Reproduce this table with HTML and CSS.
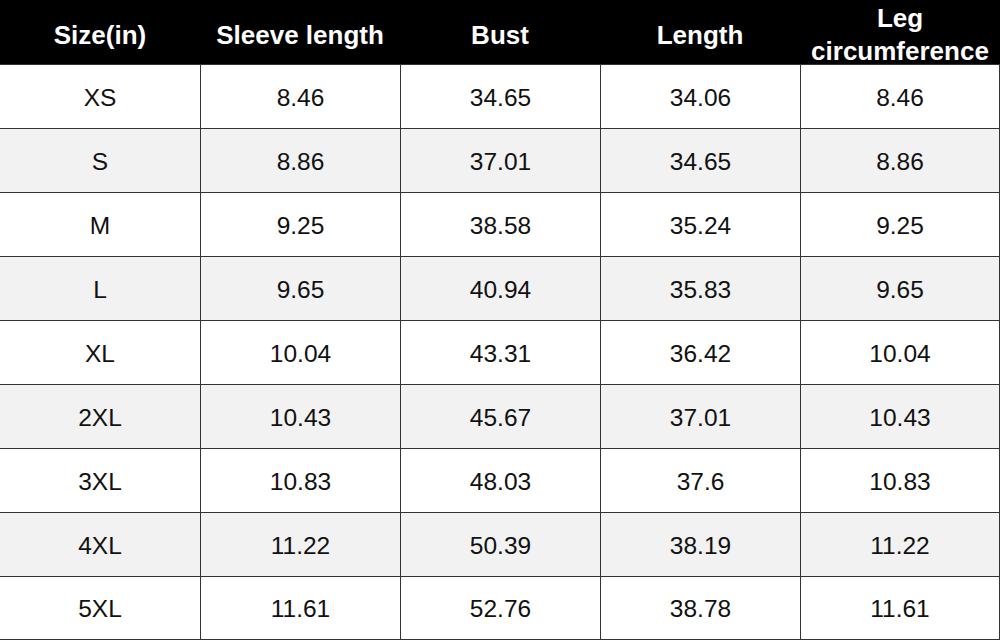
FILE: index.html
```html
<!DOCTYPE html>
<html>
<head>
<meta charset="utf-8">
<link rel="stylesheet" href="styles.css">
</head>
<body>
<div class="chart">
  <div class="row head">
    <div class="cell">Size(in)</div>
    <div class="cell">Sleeve length</div>
    <div class="cell">Bust</div>
    <div class="cell">Length</div>
    <div class="cell">Leg<br>circumference</div>
  </div>
  <div class="row"><div class="cell">XS</div><div class="cell">8.46</div><div class="cell">34.65</div><div class="cell">34.06</div><div class="cell">8.46</div></div>
  <div class="row alt"><div class="cell">S</div><div class="cell">8.86</div><div class="cell">37.01</div><div class="cell">34.65</div><div class="cell">8.86</div></div>
  <div class="row"><div class="cell">M</div><div class="cell">9.25</div><div class="cell">38.58</div><div class="cell">35.24</div><div class="cell">9.25</div></div>
  <div class="row alt"><div class="cell">L</div><div class="cell">9.65</div><div class="cell">40.94</div><div class="cell">35.83</div><div class="cell">9.65</div></div>
  <div class="row"><div class="cell">XL</div><div class="cell">10.04</div><div class="cell">43.31</div><div class="cell">36.42</div><div class="cell">10.04</div></div>
  <div class="row alt"><div class="cell">2XL</div><div class="cell">10.43</div><div class="cell">45.67</div><div class="cell">37.01</div><div class="cell">10.43</div></div>
  <div class="row"><div class="cell">3XL</div><div class="cell">10.83</div><div class="cell">48.03</div><div class="cell">37.6</div><div class="cell">10.83</div></div>
  <div class="row alt"><div class="cell">4XL</div><div class="cell">11.22</div><div class="cell">50.39</div><div class="cell">38.19</div><div class="cell">11.22</div></div>
  <div class="row last"><div class="cell">5XL</div><div class="cell">11.61</div><div class="cell">52.76</div><div class="cell">38.78</div><div class="cell">11.61</div></div>
</div>
</body>
</html>
```
FILE: styles.css
```css
html, body {
  margin: 0;
  padding: 0;
  background: #ffffff;
}
.chart {
  width: 1000px;
  height: 640px;
  font-family: "Liberation Sans", Arial, sans-serif;
  color: #111111;
  display: flex;
  flex-direction: column;
}
.row {
  display: grid;
  grid-template-columns: repeat(5, 200px);
  height: 64px;
  box-sizing: border-box;
  border-top: 1px solid #333333;
  background: #ffffff;
}
.row.alt {
  background: #f2f2f2;
}
.row.last {
  border-bottom: 1px solid #333333;
}
.cell {
  box-sizing: border-box;
  display: flex;
  align-items: center;
  justify-content: center;
  text-align: center;
  font-size: 24.5px;
  padding-top: 2px;
}
.row .cell + .cell {
  border-left: 1px solid #333333;
}
.row .cell:last-child {
  border-right: 1px solid #333333;
}
.row.head {
  background: #000000;
  border-top: none;
  color: #ffffff;
}
.row.head .cell {
  font-weight: bold;
  font-size: 26px;
  line-height: 33px;
  padding-top: 2px;
  border-left: none;
  border-right: none;
}
```
